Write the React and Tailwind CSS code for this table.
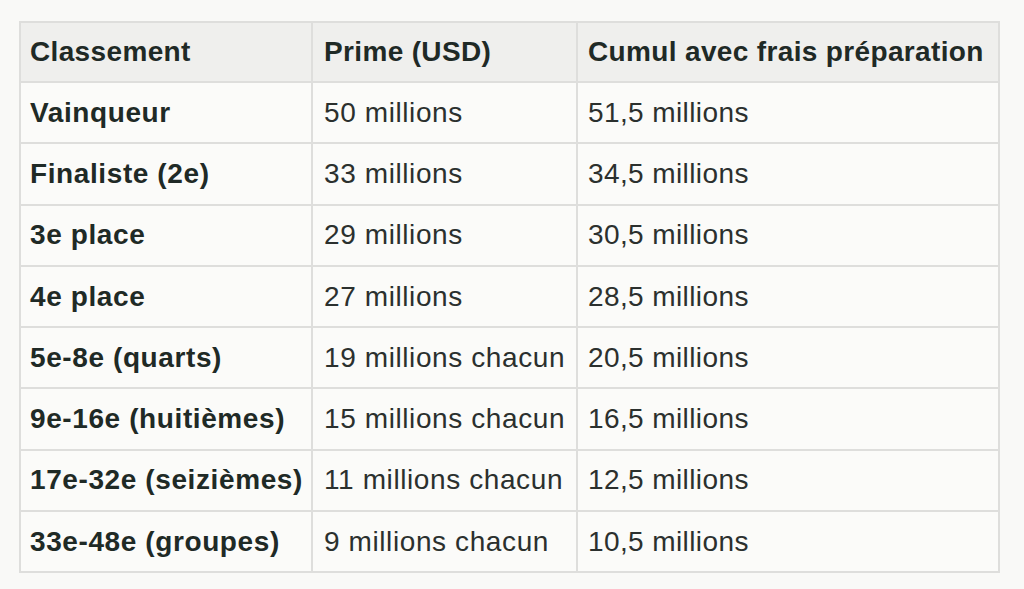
import React from "react";

const rows = [
  ["Vainqueur", "50 millions", "51,5 millions"],
  ["Finaliste (2e)", "33 millions", "34,5 millions"],
  ["3e place", "29 millions", "30,5 millions"],
  ["4e place", "27 millions", "28,5 millions"],
  ["5e-8e (quarts)", "19 millions chacun", "20,5 millions"],
  ["9e-16e (huitièmes)", "15 millions chacun", "16,5 millions"],
  ["17e-32e (seizièmes)", "11 millions chacun", "12,5 millions"],
  ["33e-48e (groupes)", "9 millions chacun", "10,5 millions"],
];

export default function App() {
  return (
    <div className="w-[1024px] h-[589px] bg-[#f9f9f7] pt-[21px] pl-[19px] font-['Liberation_Sans',Arial,sans-serif] text-[#1f2a26]">
      <table className="border-collapse table-fixed w-[979px] text-[28px]">
        <colgroup>
          <col className="w-[292px]" />
          <col className="w-[265px]" />
          <col className="w-[422px]" />
        </colgroup>
        <thead>
          <tr className="h-[60px] bg-[#efefed]">
            <th className="border-2 border-[#dededc] pl-[9px] text-left font-bold tracking-[0.35px]">Classement</th>
            <th className="border-2 border-[#dededc] pl-[11px] text-left font-bold tracking-[0.35px]">Prime (USD)</th>
            <th className="border-2 border-[#dededc] pl-[10px] text-left font-bold tracking-[0.35px] whitespace-nowrap">Cumul avec frais préparation</th>
          </tr>
        </thead>
        <tbody>
          {rows.map((r) => (
            <tr key={r[0]} className="h-[61.3px] bg-[#fbfbf9]">
              <td className="border-2 border-[#dededc] pl-[9px] font-bold tracking-[0.6px] whitespace-nowrap">{r[0]}</td>
              <td className="border-2 border-[#dededc] pl-[11px] text-[#2b302e] tracking-[0.6px] whitespace-nowrap">{r[1]}</td>
              <td className="border-2 border-[#dededc] pl-[10px] text-[#2b302e] tracking-[0.4px]">{r[2]}</td>
            </tr>
          ))}
        </tbody>
      </table>
    </div>
  );
}
